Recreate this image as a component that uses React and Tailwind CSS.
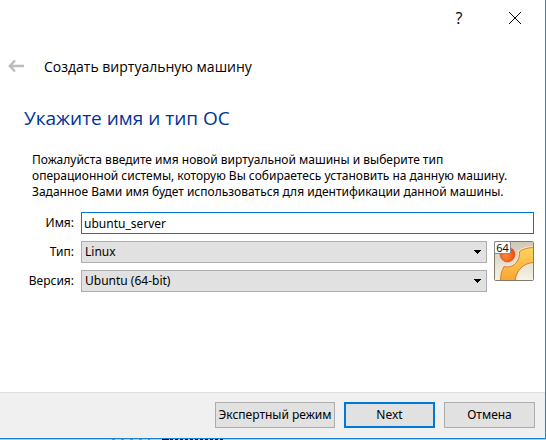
function Chevron() {
  return (
    <svg className="pointer-events-none absolute top-[9px] right-1.5 h-1 w-[7px]" viewBox="0 0 7 4" fill="#000" shapeRendering="crispEdges">
      <path d="M0 0H7L3.5 4Z" />
    </svg>
  );
}

function Combo({ id, options }) {
  return (
    <div className="relative">
      <select
        id={id}
        className="block h-[22px] w-full appearance-none border border-[#adadad] bg-[#e1e1e1] px-[3px] leading-5 outline-none"
      >
        {options.map((o) => (
          <option key={o}>{o}</option>
        ))}
      </select>
      <Chevron />
    </div>
  );
}

function OsIcon() {
  return (
    <svg className="h-10 w-10 shrink-0" viewBox="0 0 40 40" role="img" aria-label="Ubuntu 64">
      <defs>
        <linearGradient id="tile" x1="0" y1="0" x2="0" y2="1">
          <stop offset="0" stopColor="#cfc7b7" />
          <stop offset="1" stopColor="#f8f4e8" />
        </linearGradient>
        <linearGradient id="ring" x1="0" y1="0" x2="0" y2="1">
          <stop offset="0" stopColor="#ffd460" />
          <stop offset="1" stopColor="#fba530" />
        </linearGradient>
        <radialGradient id="ball" cx="0.4" cy="0.6" r="0.6">
          <stop offset="0" stopColor="#ff8a3c" />
          <stop offset="1" stopColor="#f04c08" />
        </radialGradient>
      </defs>
      <rect x="0.5" y="0.5" width="39" height="39" rx="1" fill="url(#tile)" />
      <path
        d="M6.500 40C6.500 35 7.500 29.500 10 25.500C14.500 26.500 18.500 25.500 21.500 22.500C24.500 19.500 26 15 25.500 10.500C29 8 34 6.500 40 6.500V21.500C29 22 22 30 21 40Z"
        fill="url(#ring)"
        stroke="#fbe6b8"
        strokeWidth="3"
      />
      <path
        d="M6.500 40C6.500 35 7.500 29.500 10 25.500C14.500 26.500 18.500 25.500 21.500 22.500C24.500 19.500 26 15 25.500 10.500C29 8 34 6.500 40 6.500V21.500C29 22 22 30 21 40Z"
        fill="url(#ring)"
        stroke="#c4673c"
        strokeWidth="0.8"
      />
      <circle cx="13.500" cy="13.500" r="7.500" fill="url(#ball)" stroke="#c8502a" strokeWidth="0.6" />
      <rect x="0.500" y="0.500" width="39" height="39" rx="1" fill="none" stroke="#85796a" />
      <rect x="0.500" y="0.500" width="16" height="12" rx="1.500" fill="#fff" stroke="#8b8b8b" />
      <text x="8.500" y="10.500" textAnchor="middle" fontSize="11" fill="#111">
        64
      </text>
    </svg>
  );
}

export default function App() {
  return (
    <div className="min-h-screen bg-[#c8c8c8] font-['Noto_Sans','Open_Sans',sans-serif] text-[12px] leading-4 text-black">
      <main className="flex min-h-[calc(100vh-1px)] flex-col border-r border-b border-[#1883d7] bg-white">
        <div className="flex h-9 items-center justify-end gap-[34px] pr-5">
          <button type="button" aria-label="Справка" className="w-6 text-center font-['Open_Sans',sans-serif] text-[16px] leading-5">
            ?
          </button>
          <button type="button" aria-label="Закрыть" className="flex w-5 justify-center">
            <svg className="h-3 w-3" viewBox="0 0 12 12" stroke="#000" fill="none">
              <path d="M0 0L12 12M12 0L0 12" />
            </svg>
          </button>
        </div>

        <header className="mt-[21px] flex items-center gap-5 pl-2">
          <button type="button" aria-label="Назад" disabled>
            <svg className="h-4 w-4" viewBox="0 0 16 16" stroke="#bcbcbc" strokeWidth="2.4" fill="none">
              <path d="M17 7H2M7 1.500L1.800 7L7 12.500" />
            </svg>
          </button>
          <h1 className="font-['Open_Sans','Noto_Sans',sans-serif] text-[14px] leading-5">Создать виртуальную машину</h1>
        </header>

        <h2 className="mt-[27px] pl-6 font-['Open_Sans','Noto_Sans',sans-serif] text-[19px] leading-7 text-[#003399]">
          Укажите имя и тип ОС
        </h2>

        <p className="mt-5 pr-3 pl-8">
          Пожалуйста введите имя новой виртуальной машины и выберите тип
          <br />
          операционной системы, которую Вы собираетесь установить на данную машину.
          <br />
          Заданное Вами имя будет использоваться для идентификации данной машины.
        </p>

        <form className="mt-3 grid grid-cols-[46px_1fr_40px] items-start gap-[7px] pr-[11px] pl-7">
          <label htmlFor="name" className="text-right leading-[22px]">Имя:</label>
          <input
            id="name"
            defaultValue="ubuntu_server"
            className="col-span-2 h-[22px] w-full border border-[#0078d7] bg-white px-0.5 outline-none"
          />
          <label htmlFor="type" className="text-right leading-[22px]">Тип:</label>
          <Combo id="type" options={["Linux"]} />
          <div className="row-span-2">
            <OsIcon />
          </div>
          <label htmlFor="version" className="text-right leading-[22px]">Версия:</label>
          <Combo id="version" options={["Ubuntu (64-bit)"]} />
        </form>

        <footer className="mt-auto flex justify-end gap-[9px] border-t border-[#dfdfdf] bg-[#f0f0f0] pt-[9px] pr-2.5 pb-2.5">
          <button type="button" className="h-[26px] w-[120px] border border-[#adadad] bg-[#e1e1e1] whitespace-nowrap">
            Экспертный режим
          </button>
          <button type="button" className="h-[26px] w-[91px] border-2 border-[#0078d7] bg-[#e1e1e1]">Next</button>
          <button type="button" className="h-[26px] w-[91px] border border-[#adadad] bg-[#e1e1e1]">Отмена</button>
        </footer>
      </main>
      <svg className="block h-px w-full" aria-hidden="true" shapeRendering="crispEdges">
        <path d="M112 0.5H150" stroke="#6f8fae" strokeDasharray="3 6" />
        <path d="M162 0.5H169" stroke="#000" />
        <path d="M170 0.5H223" stroke="#111" strokeDasharray="3 2" />
      </svg>
    </div>
  );
}
